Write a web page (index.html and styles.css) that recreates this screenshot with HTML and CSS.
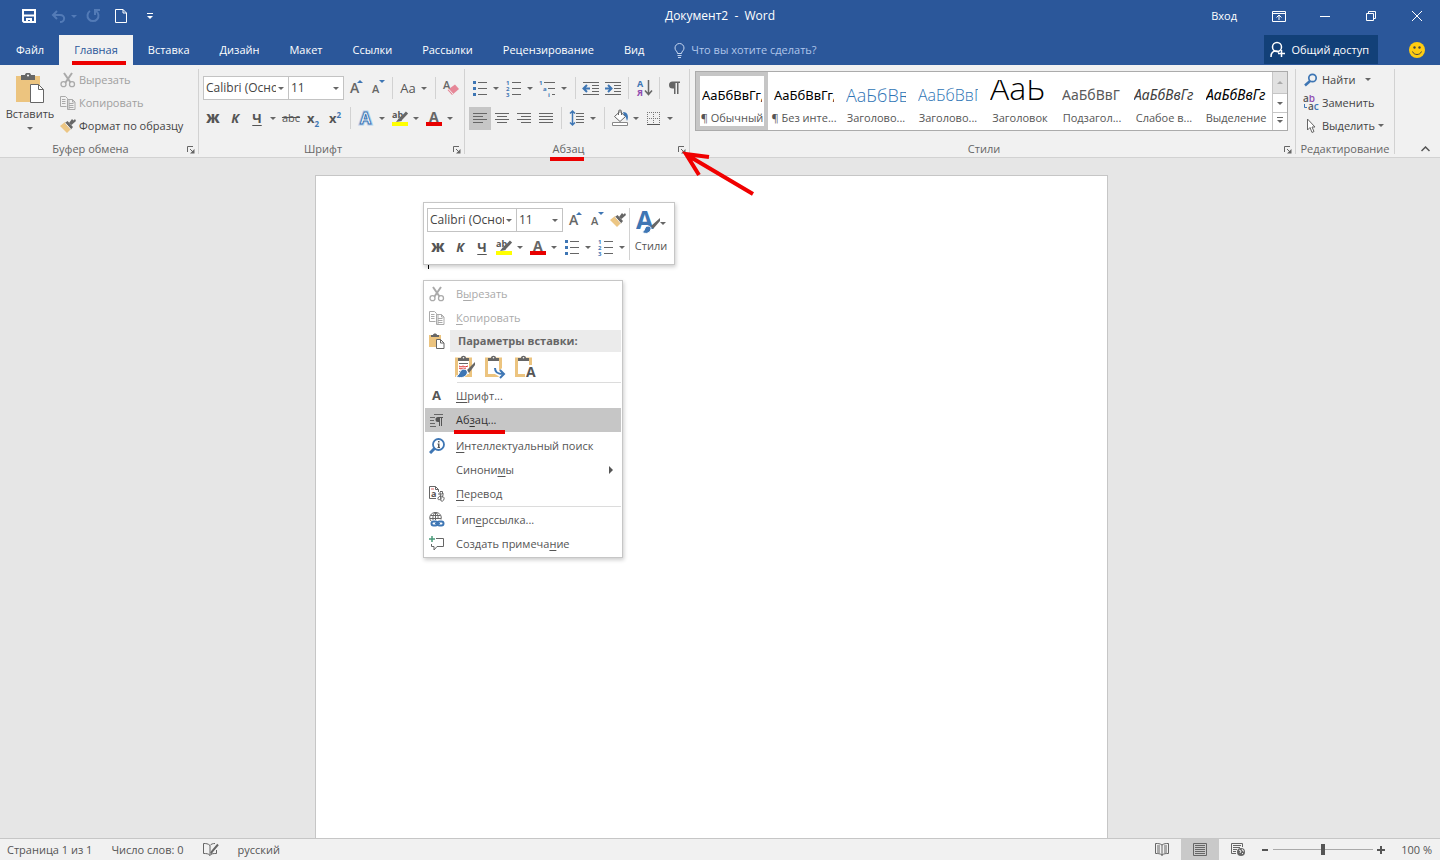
FILE: index.html
```html
<!DOCTYPE html>
<html lang="ru">
<head>
<meta charset="utf-8">
<title>Документ2 - Word</title>
<link rel="stylesheet" href="styles.css">
</head>
<body>
<svg class="sprite" aria-hidden="true">
  <symbol id="scissors" viewBox="0 0 16 16"><path d="M4 1l6.500 9.500M12 1L5.500 10.500" fill="none" stroke="currentColor" stroke-width="2"/><circle cx="3.500" cy="12.200" r="2.500" fill="none" stroke="currentColor" stroke-width="1.300"/><circle cx="12" cy="12.200" r="2.500" fill="none" stroke="currentColor" stroke-width="1.300"/></symbol>
  <symbol id="copy" viewBox="0 0 16 16"><path d="M6.500 11.500h-6v-10h5l2 2v1M9 14.500V4.500h3.500l2.500 2.500v7.500h-7.500v-10h2M12.500 4.500V7H15M2 4.500h3.500M2 6.500h3.500M2 8.500h3.500M9 8.500h4.500M9 10.500h4.500M9 12.500h4.500" fill="none" stroke="currentColor"/></symbol>
  <symbol id="brush" viewBox="0 0 16 16"><path d="M0 8l5-4 6 7-4 4z" fill="#ecc684"/><path d="M5 5l2.500-2 5.500 6-2 2.500z" fill="#666"/><path d="M9 5l3-4 1.500 1.500L15 1l1 2-4.500 4z" fill="#666"/><path d="M5 4.700l6 6.800" stroke="#f1f1f1"/></symbol>
  <symbol id="paste" viewBox="0 0 28 30"><path d="M0 3h24v26H0z" fill="#ecc47f"/><path d="M5 7V2h4c0-3 6-3 6 0h4v5z" fill="#666"/><circle cx="12" cy="2.500" r="1" fill="#fff"/><path d="M14.500 11.500h8l5 5v13h-13z" fill="#fff" stroke="#666"/><path d="M22.500 11.500v5h5" fill="none" stroke="#666"/></symbol>
  <symbol id="paste-small" viewBox="0 0 16 16"><path d="M0 2h12v12H0z" fill="#ecc47f"/><path d="M2 4V2h2c0-2 4-2 4 0h2v2z" fill="#666"/><path d="M7.500 6.500h4l3.500 3.500v5.500H7.500z" fill="#fff" stroke="#666"/><path d="M11.500 6.500V10H15" fill="none" stroke="#666"/></symbol>
  <symbol id="clip" viewBox="0 0 24 24"><path d="M3.500 4v16.500h14V4z" fill="#fff" stroke="#ecc47f" stroke-width="3"/><path d="M5 6V3h3c0-3 5-3 5 0h3v3z" fill="#666"/><circle cx="10.500" cy="2.700" r=".8" fill="#fff"/></symbol>
  <symbol id="mini-brush" viewBox="0 0 12 14"><path d="M12 0L5 7l2 2.500L12 4z" fill="#666"/><path d="M0 13c2-1 1-5 4-5s4 4 1 5.500c-2 .8-4 .5-5-.5z" fill="#3e76b4"/></symbol>
  <symbol id="bullets" viewBox="0 0 22 22"><path d="M9 5.500h9M9 11.500h9M9 17.500h9" stroke="#666"/><path d="M4 4h3v3H4zM4 10h3v3H4zM4 16h3v3H4z" fill="#3e76b4"/></symbol>
  <symbol id="numbers" viewBox="0 0 22 22"><path d="M9 5.500h9M9 11.500h9M9 17.500h9" stroke="#666"/><g class="tiny-digit"><text x="3" y="8">1</text><text x="3" y="14">2</text><text x="3" y="20">3</text></g></symbol>
  <symbol id="multilevel" viewBox="0 0 22 22"><path d="M7 5.500h11M11 11.500h7M15 17.500h3" stroke="#666"/><g class="tiny-digit"><text x="2" y="8">1</text><text x="6" y="14">a</text><text x="11" y="20">i</text></g></symbol>
  <symbol id="outdent" viewBox="0 0 22 22"><path d="M3 5.500h16M12 8.500h7M12 11.500h7M12 14.500h7M3 17.500h16" stroke="#666"/><path d="M10 11.500H4M7 8l-3.500 3.500L7 15" fill="none" stroke="#3e76b4" stroke-width="2"/></symbol>
  <symbol id="indent" viewBox="0 0 22 22"><path d="M3 5.500h16M12 8.500h7M12 11.500h7M12 14.500h7M3 17.500h16" stroke="#666"/><path d="M3 11.500h6M6 8l3.500 3.500L6 15" fill="none" stroke="#3e76b4" stroke-width="2"/></symbol>
  <symbol id="sort" viewBox="0 0 22 22"><text x="4" y="10" class="sort-letter" fill="#3e76b4">А</text><text x="4" y="19" class="sort-letter" fill="#8f4bb0">Я</text><path d="M15.500 3v14M12 13.500l3.500 4 3.500-4" fill="none" stroke="#666" stroke-width="1.500"/></symbol>
  <symbol id="pilcrow" viewBox="0 0 22 22"><path d="M16 4.500H8.500a3.500 3.500 0 000 7H10V17h1.500V6H13v11h1.500V6H16z" fill="#666"/></symbol>
  <symbol id="align-left" viewBox="0 0 22 22"><path d="M4 6.500h14M4 9.500h10M4 12.500h14M4 15.500h10" stroke="#666"/></symbol>
  <symbol id="align-center" viewBox="0 0 22 22"><path d="M4 6.500h14M6 9.500h10M4 12.500h14M6 15.500h10" stroke="#666"/></symbol>
  <symbol id="align-right" viewBox="0 0 22 22"><path d="M4 6.500h14M8 9.500h10M4 12.500h14M8 15.500h10" stroke="#666"/></symbol>
  <symbol id="justify" viewBox="0 0 22 22"><path d="M4 6.500h14M4 9.500h14M4 12.500h14M4 15.500h14" stroke="#666"/></symbol>
  <symbol id="spacing" viewBox="0 0 22 22"><path d="M10 6.500h8M10 9.500h8M10 12.500h8M10 15.500h8" stroke="#666"/><path d="M6.500 4v14M4 6.500L6.500 4 9 6.500M4 15.500L6.500 18 9 15.500" fill="none" stroke="#3e76b4" stroke-width="1.500"/></symbol>
  <symbol id="shading" viewBox="0 0 22 22"><path d="M3.500 15.500h15v3h-15z" fill="#fff" stroke="#888"/><path d="M5.500 9.500l5.500-5 5.500 5-5.500 5z" fill="#fff" stroke="#666"/><path d="M9.500 8V4.500a1.500 1.500 0 013 0V8" fill="none" stroke="#666"/><path d="M14 5c5 0 6 5 4 9-1-3-1-5-3-6z" fill="#3e76b4"/></symbol>
  <symbol id="borders" viewBox="0 0 22 22"><path d="M4.500 5v12M10.500 5v12M16.500 5v12M4 5.500h13M4 11.500h13" stroke="#777" stroke-dasharray="1 1"/><path d="M4 17.500h13" stroke="#555"/></symbol>
  <symbol id="highlight" viewBox="0 0 22 22"><text x="3" y="11" class="hl-letter">ab</text><path d="M18 5.500L11 13" stroke="#666" stroke-width="3"/><path d="M7 15l3-4 3 3z" fill="#666"/><path d="M3 15h16v4H3z" fill="#ff0"/></symbol>
  <symbol id="font-color" viewBox="0 0 22 22"><text x="6" y="15" class="fc-letter">A</text><path d="M3 15h16v4H3z" fill="#e80000"/></symbol>
  <symbol id="text-effect" viewBox="0 0 22 22"><text x="5" y="17" class="glow-soft">A</text><text x="5" y="17" class="glow-letter">A</text></symbol>
  <symbol id="eraser" viewBox="0 0 22 22"><text x="3" y="12" class="er-letter">A</text><path d="M15 7.500L19 12l-7 6-4.500-5z" fill="#e68797"/><path d="M8.500 12l4.500 5" stroke="#f1f1f1"/></symbol>
  <symbol id="grow" viewBox="0 0 22 22"><text x="6" y="16" class="grow-letter">A</text><path d="M13 6l3-3 3 3z" fill="#3e76b4"/></symbol>
  <symbol id="shrink" viewBox="0 0 22 22"><text x="6" y="16" class="shrink-letter">A</text><path d="M13 3h6l-3 3z" fill="#3e76b4"/></symbol>
  <symbol id="launcher" viewBox="0 0 8 8"><path d="M.5 6V.5H6" fill="none" stroke="#666"/><path d="M3 3l3 3" stroke="#666"/><path d="M7.500 3v4.500H3z" fill="#666"/></symbol>
</svg>

<header class="app-header">
  <div class="title-bar">
    <div class="quick">
      <button class="q" aria-label="Сохранить"><svg width="14" height="14" viewBox="0 0 14 14"><path d="M1 1h12v12H2l-1-1z" fill="none" stroke="#fff" stroke-width="2"/><path d="M2 6.500h10" stroke="#fff" stroke-width="2"/><path d="M4 9h6v4H8v-2H6v2H4z" fill="#fff"/></svg></button>
      <button class="q undo" aria-label="Отменить"><svg width="15" height="13" viewBox="0 0 15 13"><path d="M6 1L2 5l4 4M2 5h7c6 0 5 7 0 7" fill="none" stroke="#537bb7" stroke-width="2"/></svg><i class="caret"></i></button>
      <button class="q redo" aria-label="Повторить"><svg width="14" height="14" viewBox="0 0 14 14"><path d="M4 2a5.500 5.500 0 106 0M9 6V1h5" fill="none" stroke="#537bb7" stroke-width="2"/></svg></button>
      <button class="q new" aria-label="Создать"><svg width="12" height="14" viewBox="0 0 12 14"><path d="M.5.5H8L11.500 4v9.500H.5zM8 .5V4h3.500" fill="none" stroke="#fff"/></svg></button>
      <button class="q" aria-label="Настройка панели"><svg width="6" height="7" viewBox="0 0 6 7"><path d="M0 .5h6" stroke="#fff"/><path d="M0 3h6L3 6z" fill="#fff"/></svg></button>
    </div>
    <div class="doc-title">Документ2 &nbsp;-&nbsp; Word</div>
    <div class="window-tools">
      <button class="sign-in">Вход</button>
      <button class="win" aria-label="Параметры ленты"><svg width="14" height="11" viewBox="0 0 14 11"><path d="M.5.5h13v10H.5zM.5 2.500h13M7 9V4M4.500 6.500L7 4l2.500 2.500" fill="none" stroke="#fff"/></svg></button>
      <button class="win" aria-label="Свернуть"><svg width="10" height="10" viewBox="0 0 10 10"><path d="M0 5.500h10" stroke="#fff"/></svg></button>
      <button class="win" aria-label="Восстановить"><svg width="10" height="10" viewBox="0 0 10 10"><path d="M.5 2.500h7v7h-7zM2.500 2.500v-2h7v7h-2" fill="none" stroke="#fff"/></svg></button>
      <button class="win" aria-label="Закрыть"><svg width="10" height="10" viewBox="0 0 10 10"><path d="M0 0l10 10M10 0L0 10" stroke="#fff"/></svg></button>
    </div>
  </div>
  <nav class="tabs">
    <button class="tab">Файл</button>
    <button class="tab active"><span class="marked">Главная</span></button>
    <button class="tab">Вставка</button>
    <button class="tab">Дизайн</button>
    <button class="tab">Макет</button>
    <button class="tab">Ссылки</button>
    <button class="tab">Рассылки</button>
    <button class="tab">Рецензирование</button>
    <button class="tab">Вид</button>
    <label class="tell-me"><svg width="11" height="15" viewBox="0 0 11 15"><path d="M3.500 10.500C3.500 8 1 8 1 5a4.500 4.500 0 019 0c0 3-2.500 3-2.500 5.500zM3.500 12.500h4M4 14.500h3" fill="none" stroke="#c5d6f0"/></svg><input type="text" placeholder="Что вы хотите сделать?"></label>
    <button class="share"><svg width="16" height="17" viewBox="0 0 16 17"><circle cx="7" cy="6" r="4.500" fill="none" stroke="#fff" stroke-width="1.500"/><path d="M1 16c0-4 2-6 5-6l3 1M11.500 9v7M8 12.500h7" fill="none" stroke="#fff" stroke-width="1.500"/></svg>Общий доступ</button>
    <button class="smile" aria-label="Отзыв"><svg width="16" height="16" viewBox="0 0 16 16"><circle cx="8" cy="8" r="8" fill="#fc1"/><circle cx="5.500" cy="5.500" r="1.200" fill="#444"/><circle cx="10.500" cy="5.500" r="1.200" fill="#444"/><path d="M3.500 9.500c1.500 4 7.500 4 9 0" fill="none" stroke="#444"/></svg></button>
  </nav>
</header>

<section class="ribbon">
  <div class="group clipboard">
    <div class="group-body">
      <button class="paste"><svg width="28" height="30"><use href="#paste"/></svg>Вставить<i class="caret"></i></button>
      <div class="commands">
        <button class="command" disabled><svg width="16" height="16"><use href="#scissors"/></svg>Вырезать</button>
        <button class="command" disabled><svg width="16" height="16"><use href="#copy"/></svg>Копировать</button>
        <button class="command"><svg width="16" height="16"><use href="#brush"/></svg>Формат по образцу</button>
      </div>
    </div>
    <div class="group-label"><span>Буфер обмена</span><button class="launcher" aria-label="Буфер обмена: параметры"><svg width="8" height="8"><use href="#launcher"/></svg></button></div>
  </div>

  <div class="group font">
    <div class="group-body rows">
      <div class="row">
        <span class="combo family"><select aria-label="Шрифт"><option>Calibri (Основной текст)</option></select></span>
        <span class="combo size"><select aria-label="Размер шрифта"><option>11</option></select></span>
        <button class="btn" aria-label="Увеличить размер"><svg><use href="#grow"/></svg></button>
        <button class="btn" aria-label="Уменьшить размер"><svg><use href="#shrink"/></svg></button>
        <i class="sep"></i>
        <button class="btn split case"><span>Aa</span><i class="caret"></i></button>
        <i class="sep"></i>
        <button class="btn" aria-label="Очистить формат"><svg><use href="#eraser"/></svg></button>
      </div>
      <div class="row">
        <button class="btn bold">Ж</button>
        <button class="btn italic">К</button>
        <button class="btn split underline"><span>Ч</span><i class="caret"></i></button>
        <button class="btn strike">abc</button>
        <button class="btn script">x<sub>2</sub></button>
        <button class="btn script">x<sup>2</sup></button>
        <i class="sep"></i>
        <button class="btn split" aria-label="Текстовые эффекты"><svg><use href="#text-effect"/></svg><i class="caret"></i></button>
        <button class="btn split" aria-label="Цвет выделения"><svg><use href="#highlight"/></svg><i class="caret"></i></button>
        <button class="btn split" aria-label="Цвет текста"><svg><use href="#font-color"/></svg><i class="caret"></i></button>
      </div>
    </div>
    <div class="group-label"><span>Шрифт</span><button class="launcher" aria-label="Шрифт: параметры"><svg width="8" height="8"><use href="#launcher"/></svg></button></div>
  </div>

  <div class="group paragraph">
    <div class="group-body rows">
      <div class="row">
        <button class="btn split" aria-label="Маркеры"><svg><use href="#bullets"/></svg><i class="caret"></i></button>
        <button class="btn split" aria-label="Нумерация"><svg><use href="#numbers"/></svg><i class="caret"></i></button>
        <button class="btn split" aria-label="Многоуровневый список"><svg><use href="#multilevel"/></svg><i class="caret"></i></button>
        <i class="sep"></i>
        <button class="btn" aria-label="Уменьшить отступ"><svg><use href="#outdent"/></svg></button>
        <button class="btn" aria-label="Увеличить отступ"><svg><use href="#indent"/></svg></button>
        <i class="sep"></i>
        <button class="btn" aria-label="Сортировка"><svg><use href="#sort"/></svg></button>
        <i class="sep"></i>
        <button class="btn" aria-label="Отобразить все знаки"><svg><use href="#pilcrow"/></svg></button>
      </div>
      <div class="row">
        <button class="btn pressed" aria-label="По левому краю"><svg><use href="#align-left"/></svg></button>
        <button class="btn" aria-label="По центру"><svg><use href="#align-center"/></svg></button>
        <button class="btn" aria-label="По правому краю"><svg><use href="#align-right"/></svg></button>
        <button class="btn" aria-label="По ширине"><svg><use href="#justify"/></svg></button>
        <i class="sep"></i>
        <button class="btn split" aria-label="Интервал"><svg><use href="#spacing"/></svg><i class="caret"></i></button>
        <i class="sep"></i>
        <button class="btn split" aria-label="Заливка"><svg><use href="#shading"/></svg><i class="caret"></i></button>
        <button class="btn split" aria-label="Границы"><svg><use href="#borders"/></svg><i class="caret"></i></button>
      </div>
    </div>
    <div class="group-label"><span class="marked">Абзац</span><button class="launcher pointed" aria-label="Абзац: параметры"><svg width="8" height="8"><use href="#launcher"/></svg><svg class="pointer" width="76" height="48" viewBox="0 0 76 48"><path d="M71 44L5 5M27 7L4 4l13 21" fill="none" stroke="#f00000" stroke-width="4"/></svg></button></div>
  </div>

  <div class="group styles">
    <div class="group-body">
      <div class="gallery">
        <button class="style selected"><span class="sample">АаБбВвГг,</span><span class="name">¶ Обычный</span></button>
        <button class="style"><span class="sample">АаБбВвГг,</span><span class="name">¶ Без инте...</span></button>
        <button class="style"><span class="sample h1">АаБбВв</span><span class="name">Заголово...</span></button>
        <button class="style"><span class="sample h2">АаБбВвГ</span><span class="name">Заголово...</span></button>
        <button class="style"><span class="sample title">АаБ</span><span class="name">Заголовок</span></button>
        <button class="style"><span class="sample subtitle">АаБбВвГ</span><span class="name">Подзагол...</span></button>
        <button class="style"><span class="sample soft">АаБбВвГг</span><span class="name">Слабое в...</span></button>
        <button class="style"><span class="sample em">АаБбВвГг</span><span class="name">Выделение</span></button>
        <div class="gallery-scroll">
          <button disabled aria-label="Вверх"><i class="caret up"></i></button>
          <button aria-label="Вниз"><i class="caret"></i></button>
          <button class="more" aria-label="Ещё"><i class="caret"></i></button>
        </div>
      </div>
    </div>
    <div class="group-label"><span>Стили</span><button class="launcher" aria-label="Стили: параметры"><svg width="8" height="8"><use href="#launcher"/></svg></button></div>
  </div>

  <div class="group editing">
    <div class="group-body">
      <div class="commands">
        <button class="command find"><svg width="16" height="16" viewBox="0 0 16 16"><circle cx="9.500" cy="6" r="3.700" fill="none" stroke="#3e76b4" stroke-width="1.700"/><path d="M7 9l-5 4.500" stroke="#3e76b4" stroke-width="2.500"/></svg>Найти<i class="caret"></i></button>
        <button class="command"><svg width="16" height="16" viewBox="0 0 16 16"><text x="0" y="7" class="rep">a<tspan fill="#8f4bb0">b</tspan></text><text x="5" y="15" class="rep">a<tspan fill="#3e76b4">c</tspan></text><path d="M1.500 9v3.500H4" fill="none" stroke="#3e76b4"/></svg>Заменить</button>
        <button class="command"><svg width="16" height="16" viewBox="0 0 16 16"><path d="M4.500 1v11l2.500-2.500 2 5 2-1-2-4.500h3z" fill="#fff" stroke="#666"/></svg>Выделить<i class="caret"></i></button>
      </div>
    </div>
    <div class="group-label"><span>Редактирование</span></div>
  </div>
  <button class="collapse" aria-label="Свернуть ленту"><svg width="9" height="6" viewBox="0 0 9 6"><path d="M.5 5l4-4 4 4" fill="none" stroke="#555" stroke-width="1.500"/></svg></button>
</section>

<main class="workspace">
  <article class="page">
    <i class="text-cursor"></i>
    <div class="mini-toolbar">
      <div class="mini-rows">
        <div class="row">
          <span class="combo family"><select aria-label="Шрифт выделения"><option>Calibri (Основной текст)</option></select></span>
          <span class="combo size"><select aria-label="Размер выделения"><option>11</option></select></span>
          <button class="btn" aria-label="Увеличить размер"><svg><use href="#grow"/></svg></button>
          <button class="btn" aria-label="Уменьшить размер"><svg><use href="#shrink"/></svg></button>
          <button class="btn" aria-label="Формат по образцу"><svg class="small"><use href="#brush"/></svg></button>
        </div>
        <div class="row">
          <button class="btn bold">Ж</button>
          <button class="btn italic">К</button>
          <button class="btn underline"><span>Ч</span></button>
          <button class="btn split" aria-label="Цвет выделения"><svg><use href="#highlight"/></svg><i class="caret"></i></button>
          <button class="btn split" aria-label="Цвет текста"><svg><use href="#font-color"/></svg><i class="caret"></i></button>
          <button class="btn split" aria-label="Маркеры"><svg><use href="#bullets"/></svg><i class="caret"></i></button>
          <button class="btn split" aria-label="Нумерация"><svg><use href="#numbers"/></svg><i class="caret"></i></button>
        </div>
      </div>
      <button class="mini-styles"><span><svg width="24" height="24" viewBox="0 0 24 24"><text x="0" y="18" class="style-letter">A</text><path d="M24 7l-9 8 2 3 7-8z" fill="#666"/><path d="M6 21c3 0 2-6 6-6s4 5 0 7c-2 1-5 0-6-1z" fill="#3e76b4" stroke="#fff"/></svg><i class="caret"></i></span>Стили</button>
    </div>

    <div class="context-menu" role="menu">
      <button class="item" role="menuitem" disabled><svg width="16" height="16"><use href="#scissors"/></svg><span>В<u>ы</u>резать</span></button>
      <button class="item" role="menuitem" disabled><svg width="16" height="16"><use href="#copy"/></svg><span><u>К</u>опировать</span></button>
      <div class="paste-head"><svg width="16" height="16"><use href="#paste-small"/></svg><strong>Параметры вставки:</strong></div>
      <div class="paste-options">
        <button aria-label="Сохранить исходное форматирование"><svg width="24" height="24" viewBox="0 0 24 24"><use href="#clip"/><path d="M6 8.500h9" stroke="#666"/><path d="M6 11l2 1 2-1 2 1 3-1M6 13l2 1 2-1 3 1" fill="none" stroke="#d33"/><path d="M6 16.500h6" stroke="#666"/><path d="M22 7l-8 8 2 3 6-8z" fill="#666"/><path d="M3 21c4 0 3-7 8-7 5 1 4 6 0 8-3 1-6 1-8-1z" fill="#3e76b4" stroke="#fff"/></svg></button>
        <button aria-label="Объединить форматирование"><svg width="24" height="24" viewBox="0 0 24 24"><use href="#clip"/><path d="M12 13c0 5 3 6 8 6M17 15l4 4-4 4" fill="none" stroke="#fff" stroke-width="5"/><path d="M12 13c0 5 3 6 8 6M17 15l4 4-4 4" fill="none" stroke="#3e76b4" stroke-width="2"/></svg></button>
        <button aria-label="Сохранить только текст"><svg width="24" height="24" viewBox="0 0 24 24"><use href="#clip"/><path d="M12 10h11v12H12z" fill="#fff"/><text x="13" y="22" class="clip-letter">A</text></svg></button>
      </div>
      <hr>
      <button class="item" role="menuitem"><svg width="16" height="16" viewBox="0 0 16 16"><text x="3" y="12" class="menu-letter">A</text></svg><span><u>Ш</u>рифт...</span></button>
      <button class="item hover" role="menuitem"><svg width="16" height="16" viewBox="0 0 16 16"><path d="M5 2.500h9M1 5.500h5M1 8.500h4M1 11.500h5M1 14.500h6" stroke="#666"/><path d="M14 5H9a2.500 2.500 0 000 5h1v4h1V6h1v8h1V6h1z" fill="#555"/></svg><span class="marked">Аб<u>з</u>ац...</span></button>
      <hr class="blank">
      <button class="item" role="menuitem"><svg width="16" height="16" viewBox="0 0 16 16"><circle cx="9.500" cy="6.500" r="5.500" fill="none" stroke="#3e76b4" stroke-width="1.800"/><path d="M5.500 10.500L1 15" stroke="#3e76b4" stroke-width="3"/><path d="M9 3h1.500v1.500H9zM8.500 5.500h2V9H11v1H8.500V9H9V6.500h-.5z" fill="#555"/></svg><span><u>И</u>нтеллектуальный поиск</span></button>
      <button class="item submenu" role="menuitem"><i></i><span>Синони<u>м</u>ы</span></button>
      <button class="item" role="menuitem"><svg width="16" height="16" viewBox="0 0 16 16"><path d="M7 12.500H.5V.5h6l3 3V6M6.500.5v3h3M11 5.500h2.500V8" fill="none" stroke="#666"/><path d="M2 3h3" stroke="#d66"/><text x="2" y="11" class="tr-letter">a</text><path d="M9 8h6M11 6l1 9M14 9c-1 5-6 6-5 3s7-2 6 1-2 2-3 2" fill="none" stroke="#666"/></svg><span><u>П</u>еревод</span></button>
      <hr>
      <button class="item" role="menuitem"><svg width="16" height="16" viewBox="0 0 16 16"><path d="M2 9C-1 5 2 .5 6.500.5S13 4 12 7.500M1.500 3.500h10M1 6.500h11M4 8C3.500 3 5 1 6.500.5 8 1 9.500 3 9 7M6.500.5V8" fill="none" stroke="#666"/><rect x="2.500" y="9.500" width="6" height="4" rx="2" fill="#fff" stroke="#3e76b4" stroke-width="2"/><rect x="8.500" y="9.500" width="6" height="4" rx="2" fill="none" stroke="#3e76b4" stroke-width="2"/><path d="M6 11.500h5" stroke="#3e76b4" stroke-width="1.500"/></svg><span>Гип<u>е</u>рссылка...</span></button>
      <button class="item" role="menuitem"><svg width="16" height="16" viewBox="0 0 16 16"><path d="M7 2.500h7.500v8H8L5 14v-3.500H2.500V8" fill="none" stroke="#666"/><path d="M3 0v6M0 3h6" stroke="#4a9a7a" stroke-width="1.500"/></svg><span>Создать примеча<u>н</u>ие</span></button>
    </div>
  </article>
</main>

<footer class="status">
  <div class="status-left">
    <span>Страница 1 из 1</span><span>Число слов: 0</span>
    <button aria-label="Правописание"><svg width="16" height="13" viewBox="0 0 16 13"><path d="M7 2.500C5 .5 3 .5.500.5v10c3 0 5 0 6.500 2zM7 2.500c1-1.500 3-2 5-2M7 12.500c1.500-2 3-2 6.500-2V7" fill="none" stroke="#666"/><path d="M15 1.500l-6 7-1 2" stroke="#666" stroke-width="2"/></svg></button>
    <span>русский</span>
  </div>
  <div class="status-right">
    <button class="view" aria-label="Режим чтения"><svg width="14" height="13" viewBox="0 0 14 13"><path d="M7 2C5 .5 3 .5.500.5v10C3 10.500 5 10.500 7 12c2-1.500 4-1.500 6.500-1.500V.5C11 .5 9 .5 7 2zv11M2 3h3M2 5h3M2 7h3M2 9h3M9 3h3M9 5h3M9 7h3M9 9h3" fill="none" stroke="#666"/></svg></button>
    <button class="view current" aria-label="Разметка страницы"><svg width="14" height="13" viewBox="0 0 14 13"><path d="M.5.5h13v12H.5zM2 2.500h10M2 4.500h10M2 6.500h10M2 8.500h10M2 10.500h10" fill="none" stroke="#666"/></svg></button>
    <button class="view" aria-label="Веб-документ"><svg width="14" height="13" viewBox="0 0 14 13"><path d="M5 10.500H.5V.5h11V4M2 2.500h8M2 4.500h7M2 6.500h4M2 8.500h3" fill="none" stroke="#666"/><circle cx="10" cy="9" r="4" fill="#666"/><path d="M8 7l2 1-1 2M11 6l1 2 1 0M11 11l1-1" fill="none" stroke="#f1f1f1"/></svg></button>
    <button class="zoom-step" aria-label="Уменьшить"><svg width="8" height="8" viewBox="0 0 8 8"><path d="M1 4h6" stroke="#555" stroke-width="2"/></svg></button>
    <input class="zoom" type="range" min="0" max="100" value="50" aria-label="Масштаб">
    <button class="zoom-step" aria-label="Увеличить"><svg width="8" height="8" viewBox="0 0 8 8"><path d="M0 4h8M4 0v8" stroke="#555" stroke-width="2"/></svg></button>
    <span class="percent">100 %</span>
  </div>
</footer>
</body>
</html>
```
FILE: styles.css
```css
* { box-sizing: border-box; }
html, body { height: 100%; }
body {
  margin: 0;
  display: flex;
  flex-direction: column;
  overflow: hidden;
  background: #e6e6e6;
  color: #444;
  font: 11px/16px "Open Sans", "Noto Sans", sans-serif;
}
button, input, select { font: inherit; color: inherit; }
button {
  display: flex;
  align-items: center;
  justify-content: center;
  padding: 0;
  border: 0;
  background: none;
  white-space: nowrap;
}
svg { flex: none; display: block; }
.sprite { display: none; }
.caret {
  flex: none;
  width: 0;
  height: 0;
  border: 3px solid transparent;
  border-top-color: #666;
  border-bottom-width: 0;
}
.caret.up { border-width: 0 3px 3px; border-bottom-color: #aaa; }
.marked { position: relative; }
.marked::after {
  content: "";
  position: absolute;
  left: -2px;
  right: -8px;
  bottom: -6px;
  height: 4px;
  background: #ec0000;
}

/* Header */
.app-header { flex: none; background: #2b579a; color: #fff; }
.title-bar {
  display: grid;
  grid-template-columns: 1fr auto 1fr;
  align-items: center;
  height: 35px;
  padding-bottom: 3px;
}
.doc-title { font-size: 12px; }
.quick { display: flex; align-items: center; gap: 15px; padding-left: 22px; }
.quick .undo { gap: 5px; }
.quick .undo .caret { border-top-color: #537bb7; }
.quick .redo { margin-left: -6px; }
.quick .q:last-child { margin-left: 5px; }
.window-tools { display: flex; justify-content: flex-end; align-items: center; }
.sign-in { margin-right: 19px; }
.win { width: 46px; height: 30px; }
.tabs { display: flex; height: 30px; padding-left: 1px; }
.tab { padding: 0 15px; }
.tab.active { background: #f1f1f1; color: #2b579a; }
.tab.active .marked::after { bottom: -7px; }
.tell-me { display: flex; align-items: center; gap: 6px; flex: 1; padding-left: 15px; }
.tell-me input { flex: 1; min-width: 0; padding: 0; border: 0; background: none; outline: 0; }
.tell-me input::placeholder { color: #b0c6ea; opacity: 1; }
.share { gap: 5px; padding: 0 9px 0 6px; height: 29px; background: #124078; }
.smile { width: 62px; padding-left: 16px; }

/* Ribbon */
.ribbon {
  flex: none;
  display: flex;
  height: 93px;
  padding: 4px 0 3px;
  background: #f1f1f1;
  border-bottom: 1px solid #d2d2d2;
}
.group { flex: none; display: flex; flex-direction: column; border-right: 1px solid #d2d2d2; }
.clipboard { width: 199px; }
.font { width: 266px; }
.paragraph { width: 225px; }
.styles { flex: 1; min-width: 0; }
.editing { width: 99px; }
.group-body { flex: 1; display: flex; min-height: 0; }
.group-label { position: relative; height: 10px; display: flex; justify-content: center; align-items: center; color: #666; }
.group-label > span { margin-right: 17px; }
.editing .group-label > span { margin-right: 0; }
.paragraph .marked::after { left: -3px; right: 0; bottom: -4px; }
.launcher { position: absolute; right: 3px; bottom: 0; width: 8px; height: 8px; }
.pointer { position: absolute; left: 4px; top: 4px; z-index: 2; }
.paste {
  flex-direction: column;
  justify-content: flex-start;
  width: 60px;
  padding-top: 4px;
}
.paste .caret { margin-top: 5px; }
.paste svg { margin-bottom: 3px; }
.commands { display: flex; flex-direction: column; margin-top: -1px; }
.command { justify-content: flex-start; gap: 3px; height: 23px; }
.command.find .caret { margin-left: 7px; }
.command:disabled { color: #a0a0a0; }
.clipboard .command:disabled svg { color: #aaa; }
.editing .commands { padding-left: 7px; }
.rows { flex-direction: column; gap: 6px; padding: 7px 0 0 4px; }
.row { display: flex; align-items: center; height: 24px; }
.btn { width: 22px; height: 23px; font-size: 13px; color: #555; }
.btn svg { width: 22px; height: 22px; }
.btn svg.small { width: 16px; height: 16px; }
.btn.split { width: 34px; justify-content: flex-start; }
.btn.split > span { width: 22px; text-align: center; }
.btn.split .caret { margin-left: 2px; }
.btn.pressed { background: #c6c6c6; }
.btn.bold { font-weight: 800; }
.btn.italic { font-weight: 700; font-style: italic; }
.btn.underline { font-weight: 700; }
.btn.underline > span { text-decoration: underline; text-underline-offset: 2px; }
.btn.strike { font-size: 11px; text-decoration: line-through; }
.btn.script { font-weight: 700; }
.btn.script sub, .btn.script sup { font-size: 8px; line-height: 8px; color: #3e76b4; }
.btn.script sub { align-self: flex-end; padding-bottom: 2px; }
.btn.script sup { align-self: flex-start; padding-top: 4px; }
.sep { width: 1px; height: 22px; margin: 0 4px; background: #d2d2d2; }
.combo { position: relative; height: 24px; border: 1px solid #c3c3c3; background: #fff; }
.combo::after {
  content: "";
  position: absolute;
  right: 4px;
  top: 10px;
  border: 3px solid transparent;
  border-top-color: #666;
  border-bottom-width: 0;
}
.combo select {
  appearance: none;
  width: 100%;
  height: 100%;
  padding: 0 12px 0 2px;
  border: 0;
  border-radius: 0;
  background: none;
  outline: 0;
  font-size: 12px;
}
.combo.family { width: 86px; }
.combo.size { width: 56px; margin-left: -1px; }
.font .rows { padding-left: 3px; }
.font .combo.family { margin-left: 1px; }

/* Style gallery */
.gallery {
  flex: 1;
  display: grid;
  grid-template-columns: repeat(8, 1fr) 15px;
  height: 60px;
  margin: 2px 7px 0 5px;
  border: 1px solid #ababab;
  background: #fff;
}
.style { flex-direction: column; justify-content: flex-end; overflow: hidden; color: #555; position: relative; padding: 0 6px 1px; }
.style.selected::before { content: ""; position: absolute; inset: 0; border: 4px solid #c6c6c6; }
.sample { display: block; width: 100%; overflow: hidden; text-align: left; font: 13px/24px "Noto Sans", sans-serif; color: #000; }
.name { line-height: 22px; }
.sample.h1 { font: 300 18px/24px "Open Sans", sans-serif; color: #2e74b5; }
.sample.h2 { font: 300 16px/24px "Open Sans", sans-serif; color: #2e74b5; }
.sample.title { height: 27px; font: 300 32px/15px "Open Sans", sans-serif; }
.sample.subtitle { font-size: 14px; color: #5a5a5a; }
.sample.soft { font-size: 14px; font-style: italic; color: #404040; }
.sample.em { font-size: 14px; font-style: italic; }
.gallery-scroll { display: grid; grid-template-rows: 21px 18px 1fr; border-left: 1px solid #c6c6c6; background: #c6c6c6; gap: 1px; }
.gallery-scroll button { background: #fff; }
.gallery-scroll button:disabled { background: #e1e1e1; }
.more .caret { position: relative; }
.more .caret::before { content: ""; position: absolute; left: -3px; top: -6px; width: 6px; height: 1px; background: #666; }
.collapse { flex: none; align-self: flex-end; width: 9px; height: 10px; margin: 0 10px 0 26px; }

/* Letters inside icons */
.tiny-digit { font: 700 6px "Open Sans", sans-serif; fill: #3e76b4; }
.sort-letter { font: 700 9px "Open Sans", sans-serif; }
.hl-letter { font: 700 9px "Open Sans", sans-serif; fill: #555; }
.fc-letter { font: 700 14px "Open Sans", sans-serif; fill: #666; }
.glow-letter { font: 700 16px "Open Sans", sans-serif; fill: #fff; stroke: #3e76b4; stroke-width: 1px; }
.glow-soft { font: 700 16px "Open Sans", sans-serif; fill: #b5d0ec; stroke: #b5d0ec; stroke-width: 3px; }
.er-letter { font: 600 11px "Open Sans", sans-serif; fill: #666; }
.grow-letter { font: 600 14px "Open Sans", sans-serif; fill: #666; }
.shrink-letter { font: 600 11px "Open Sans", sans-serif; fill: #666; }
.rep { font: 600 10px "Open Sans", sans-serif; fill: #555; }
.style-letter { font: 700 25px "Open Sans", sans-serif; fill: #3e76b4; }
.clip-letter { font: 700 14px "Open Sans", sans-serif; fill: #555; }
.menu-letter { font: 700 13px "Open Sans", sans-serif; fill: #555; }
.tr-letter { font: 700 9px "Open Sans", sans-serif; fill: #555; }

/* Document */
.workspace { flex: 1; min-height: 0; display: flex; justify-content: center; padding: 17px 17px 0 0; }
.page { position: relative; width: 793px; background: #fff; border: 1px solid #c6c6c6; border-bottom: 0; }
.text-cursor { position: absolute; left: 112px; top: 78px; width: 1px; height: 15px; background: #000; }
.mini-toolbar, .context-menu {
  position: absolute;
  left: 107px;
  border: 1px solid #c6c6c6;
  background: #fff;
  box-shadow: 1px 2px 4px rgba(0, 0, 0, .2);
}
.mini-toolbar { top: 26px; display: flex; padding: 5px 2px 4px 3px; }
.mini-rows { display: flex; flex-direction: column; gap: 3px; padding-bottom: 1px; border-right: 1px solid #d2d2d2; }
.mini-toolbar .combo.family { width: 90px; }
.mini-toolbar .combo.size { width: 47px; }
.mini-styles { flex-direction: column; justify-content: flex-start; width: 42px; color: #555; }
.mini-styles > span { display: flex; align-items: center; height: 30px; }
.context-menu { top: 104px; width: 200px; padding: 1px; }
.item { justify-content: flex-start; width: 100%; height: 24px; gap: 11px; padding-left: 4px; color: #555; }
.item > i { width: 16px; }
.item:disabled { color: #aaa; }
.item.hover { background: #c6c6c6; color: #333; }
.item u { text-underline-offset: 2px; }
.item.submenu::after { content: ""; margin: 0 8px 0 auto; border: 4px solid transparent; border-left-color: #555; border-right-width: 0; }
.paste-head { display: flex; align-items: center; height: 22px; padding-left: 4px; gap: 5px; }
.paste-head strong { flex: 1; padding: 3px 8px; font-weight: 700; color: #666; background: #ebebeb; }
.paste-options { display: flex; align-items: center; gap: 6px; height: 30px; padding-left: 28px; }
.context-menu hr { height: 2px; margin: 0 0 0 32px; border: 0; border-top: 1px solid #dcdcdc; }
.context-menu hr.blank { border-color: transparent; }

/* Status bar */
.status { flex: none; display: flex; justify-content: space-between; height: 22px; padding: 0 8px 0 7px; background: #f1f1f1; border-top: 1px solid #c6c6c6; color: #555; }
.status-left, .status-right { display: flex; align-items: center; }
.status-left { gap: 19px; }
.view { width: 38px; height: 21px; }
.view.current { background: #c9c9c9; }
.zoom-step { width: 8px; margin: 0 4px; }
.zoom { appearance: none; width: 100px; height: 12px; margin: 0; background: linear-gradient(#aaa, #aaa) center / 100% 1px no-repeat; }
.zoom::-webkit-slider-thumb { appearance: none; width: 4px; height: 11px; background: #555; }
.percent { margin-left: 12px; }
```
